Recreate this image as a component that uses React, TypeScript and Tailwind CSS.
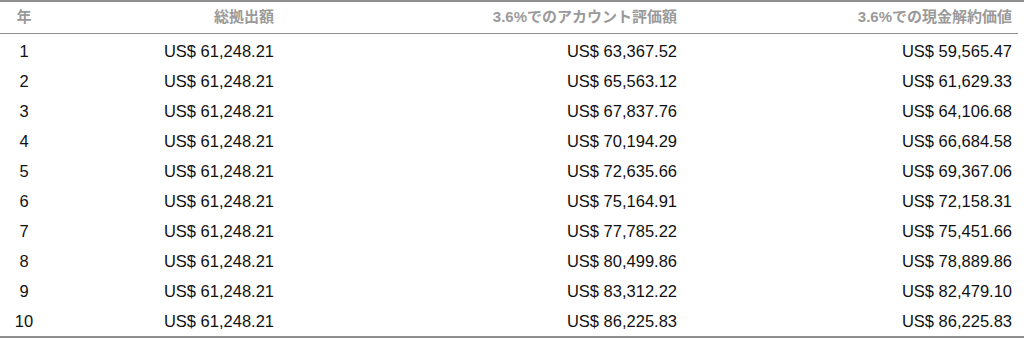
const rows: [number, string, string, string][] = [
  [1, "61,248.21", "63,367.52", "59,565.47"],
  [2, "61,248.21", "65,563.12", "61,629.33"],
  [3, "61,248.21", "67,837.76", "64,106.68"],
  [4, "61,248.21", "70,194.29", "66,684.58"],
  [5, "61,248.21", "72,635.66", "69,367.06"],
  [6, "61,248.21", "75,164.91", "72,158.31"],
  [7, "61,248.21", "77,785.22", "75,451.66"],
  [8, "61,248.21", "80,499.86", "78,889.86"],
  [9, "61,248.21", "83,312.22", "82,479.10"],
  [10, "61,248.21", "86,225.83", "86,225.83"],
];

const cols = "grid grid-cols-[48px_232px_403px_335px]";

export default function App() {
  return (
    <div
      className="h-[339px] w-[1024px] bg-white"
      style={{ fontFamily: '"Liberation Sans", "Noto Sans CJK JP", sans-serif' }}
    >
      <div className="border-y-2 border-[#8e8e8e]">
        <div
          className={`${cols} mr-[6px] h-[32px] items-center border-b border-[#8e8e8e] text-[15px] font-bold text-[#9a9a9a]`}
        >
          <div className="text-center">年</div>
          <div className="pr-[6px] text-right">総拠出額</div>
          <div className="pr-[6px] text-right">3.6%でのアカウント評価額</div>
          <div className="pr-[6px] text-right">3.6%での現金解約価値</div>
        </div>
        <div className="pb-[2px]">
          {rows.map(([year, total, account, cash]) => (
            <div
              key={year}
              className={`${cols} h-[30px] pt-[7px] text-[16.5px] leading-[20px] text-[#111]`}
            >
              <div className="text-center">{year}</div>
              <div className="pr-[6px] text-right">US$ {total}</div>
              <div className="pr-[6px] text-right">US$ {account}</div>
              <div className="pr-[6px] text-right">US$ {cash}</div>
            </div>
          ))}
        </div>
      </div>
    </div>
  );
}
